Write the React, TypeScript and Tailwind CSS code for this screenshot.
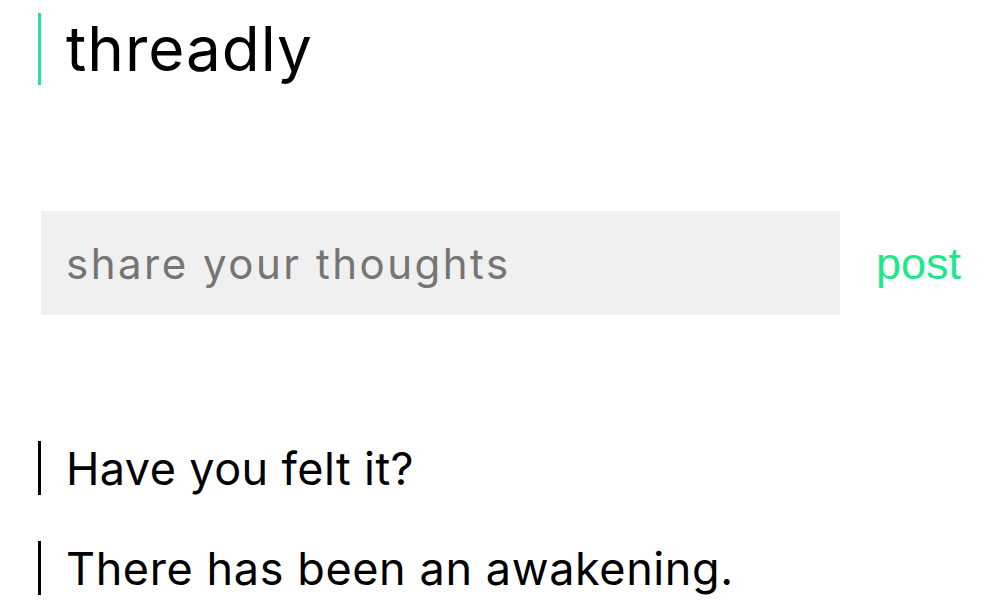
export default function App() {
  return (
    <div className="min-h-screen bg-white font-['Inter',sans-serif] text-black">
      <div className="pl-[38px] pt-[13px]">
        <div className="flex h-[72px] items-center border-l-[3px] border-[#2adf96] pl-[25px]">
          <h1 className="text-[62px] leading-none tracking-[1px]">threadly</h1>
        </div>
      </div>

      <div className="mt-[126px] flex items-center pl-[41px]">
        <input
          className="h-[104px] w-[799px] bg-[#f0f0f0] pl-[25px] text-[42px] tracking-[2.5px] text-black outline-none placeholder:text-[#757575]"
          placeholder="share your thoughts"
        />
        <button className="ml-[36px] font-['Liberation_Sans',sans-serif] text-[45px] leading-none text-[#1de98b]">
          post
        </button>
      </div>

      <div className="mt-[126px] flex flex-col gap-[46px] pl-[38px]">
        <div className="flex h-[54px] items-center border-l-[3px] border-black pl-[25px]">
          <p className="text-[45px] leading-none tracking-[0.4px]">Have you felt it?</p>
        </div>
        <div className="flex h-[54px] items-center border-l-[3px] border-black pl-[25px]">
          <p className="text-[45px] leading-none tracking-[0.6px]">There has been an awakening.</p>
        </div>
      </div>
    </div>
  );
}
